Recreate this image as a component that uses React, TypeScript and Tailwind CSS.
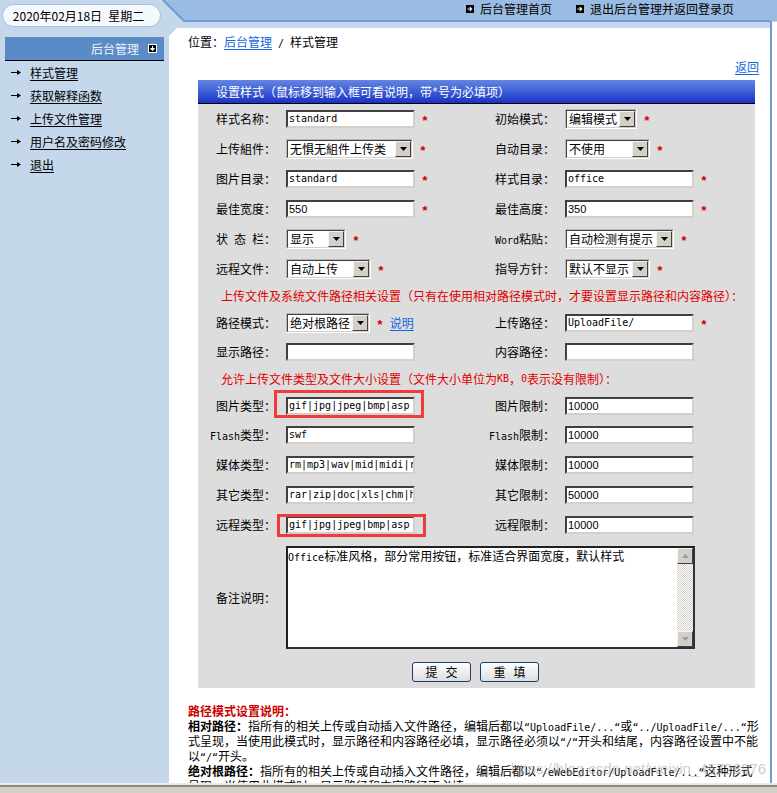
import type { ReactNode } from "react"

const MONO = "font-['DejaVu_Sans_Mono',monospace] text-[10px] leading-[10px]"

function A({ children }: { children: ReactNode }) {
  return <span className={MONO}>{children}</span>
}

function Star() {
  return (
    <span className="ml-[6px] translate-y-[3px] font-['Liberation_Mono',monospace] text-[13px] font-bold leading-[12px] text-[#d00000]">
      *
    </span>
  )
}

function TextBox({ children, numeric }: { children?: ReactNode; numeric?: boolean }) {
  return (
    <div
      className={`flex h-[18px] w-[129px] items-center overflow-hidden whitespace-nowrap border-2 border-t-[#404040] border-l-[#404040] border-r-[#d4d0c8] border-b-[#d4d0c8] bg-white pl-[1px] ${
        numeric ? "font-['Liberation_Sans',sans-serif] text-[11px]" : MONO
      }`}
    >
      {children}
    </div>
  )
}

function DropArrow() {
  return (
    <svg width="7" height="4" viewBox="0 0 7 4">
      <path d="M0 0h7L3.5 4z" fill="#000" />
    </svg>
  )
}

function Select({ value, className }: { value: string; className: string }) {
  return (
    <div className={`flex h-[20px] border border-t-[#b8b8b8] border-l-[#b8b8b8] border-r-white border-b-white ${className}`}>
      <div className="flex flex-1 items-center border border-t-[#404040] border-l-[#404040] border-r-[#d4d0c8] border-b-[#d4d0c8] bg-white">
        <span className="flex-1 overflow-hidden whitespace-nowrap pl-[2px]">{value}</span>
        <span className="flex h-[16px] w-[16px] shrink-0 items-center justify-center border border-t-[#f4f4f4] border-l-[#f4f4f4] border-r-[#404040] border-b-[#404040] bg-[#d4d0c8]">
          <DropArrow />
        </span>
      </div>
    </div>
  )
}

function Row({ className, children }: { className: string; children: ReactNode }) {
  return <div className={`grid grid-cols-[82px_200px_80px_195px] items-center ${className}`}>{children}</div>
}

function Label({ children, right }: { children: ReactNode; right?: boolean }) {
  return <div className={`whitespace-nowrap text-right ${right ? "pr-[5px]" : "pr-[4px]"}`}>{children}</div>
}

function Cell({ children, right }: { children?: ReactNode; right?: boolean }) {
  return <div className={`flex items-center ${right ? "pl-[5px]" : "pl-[6px]"}`}>{children}</div>
}

function LinkIcon() {
  return (
    <svg width="8" height="8" viewBox="0 0 8 8" className="mr-[6px]">
      <rect width="8" height="8" fill="#000" />
      <path d="M1.5 4h4M3.8 2.2 5.6 4 3.8 5.8" stroke="#fff" strokeWidth="1.2" fill="none" />
    </svg>
  )
}

function TopBar() {
  return (
    <div className="relative flex h-[28px] shrink-0">
      <svg className="absolute inset-0" width="777" height="28" viewBox="0 0 777 28" aria-hidden>
        <polygon points="163,0 777,0 777,21 184,21" fill="#9abce3" />
        <polyline points="163,0 184,21 770,21" fill="none" stroke="#6d9cd3" strokeWidth="2" />
        <rect x="770" y="21" width="2" height="7" fill="#6b9bd2" />
        <rect x="772" y="22" width="5" height="6" fill="#ffffff" />
      </svg>
      <div className="relative ml-[2px] mt-[4px] flex h-[23px] w-[159px] items-center justify-center rounded-full border border-[#a3bfdf] bg-[#f5f8fc] pr-[6px]">
        2020年02月18日<span className="ml-[6px]">星期二</span>
      </div>
      <nav className="relative ml-auto mr-[43px] flex h-[17px] items-center gap-[24px]">
        <a className="flex items-center">
          <LinkIcon />
          后台管理首页
        </a>
        <a className="flex items-center">
          <LinkIcon />
          退出后台管理并返回登录页
        </a>
      </nav>
    </div>
  )
}

function MenuArrow() {
  return (
    <svg width="12" height="7" viewBox="0 0 12 7">
      <path d="M1 3.5h8" stroke="#000" strokeWidth="1" />
      <path d="M7 1l4 2.5L7 6z" fill="#000" />
    </svg>
  )
}

function Sidebar() {
  const items = ["样式管理", "获取解释函数", "上传文件管理", "用户名及密码修改", "退出"]
  return (
    <aside className="w-[169px] shrink-0 pt-[9px]">
      <div className="mx-[5px] flex h-[24px] items-center justify-end border-b border-black bg-[#5b8bc7] pr-[7px] text-[#eef3fb]">
        <span>后台管理</span>
        <svg width="9" height="9" viewBox="0 0 9 9" className="ml-[9px]">
          <rect width="9" height="9" fill="#fff" />
          <rect x="1" y="1" width="7" height="7" fill="#000" />
          <path d="M4.5 2v2.5M2.5 4.5h4l-2 2.2z" stroke="#fff" strokeWidth="1" fill="#fff" />
        </svg>
      </div>
      <ul>
        {items.map((t) => (
          <li key={t} className="flex h-[23px] items-center pl-[10px]">
            <MenuArrow />
            <a className="ml-[8px] underline underline-offset-2">{t}</a>
          </li>
        ))}
      </ul>
    </aside>
  )
}

function RedBox({ children, className }: { children: ReactNode; className: string }) {
  return (
    <div className="relative">
      {children}
      <span className={`absolute border-[3px] border-[#ef3b3b] ${className}`} />
    </div>
  )
}

function ScrollBtn({ up }: { up?: boolean }) {
  return (
    <div className="flex h-[16px] w-[16px] items-center justify-center border border-t-[#f4f4f4] border-l-[#f4f4f4] border-r-[#404040] border-b-[#404040] bg-[#d4d0c8]">
      <svg width="7" height="4" viewBox="0 0 7 4">
        <path d={up ? "M0 4h7L3.5 0z" : "M0 0h7L3.5 4z"} fill="#9a9a9a" />
      </svg>
    </div>
  )
}

function StyleForm() {
  return (
    <section className="ml-[29px] mt-[6px] w-[557px]">
      <div className="flex h-[24px] items-center border-b border-black bg-linear-to-b from-[#6485e2] to-[#1e2ec4] pl-[18px] text-white">
        设置样式（鼠标移到输入框可看说明，带<A>*</A>号为必填项）
      </div>
      <div className="bg-[#dddddd]">
        <Row className="h-[30px]">
          <Label>样式名称：</Label>
          <Cell>
            <TextBox>standard</TextBox>
            <Star />
          </Cell>
          <Label right>初始模式：</Label>
          <Cell right>
            <Select value="编辑模式" className="w-[72px]" />
            <Star />
          </Cell>
        </Row>
        <Row className="h-[30px]">
          <Label>上传組件：</Label>
          <Cell>
            <Select value="无惧无組件上传类" className="w-[127px]" />
            <Star />
          </Cell>
          <Label right>自动目录：</Label>
          <Cell right>
            <Select value="不使用" className="w-[85px]" />
            <Star />
          </Cell>
        </Row>
        <Row className="h-[30px]">
          <Label>图片目录：</Label>
          <Cell>
            <TextBox>standard</TextBox>
            <Star />
          </Cell>
          <Label right>样式目录：</Label>
          <Cell right>
            <TextBox>office</TextBox>
            <Star />
          </Cell>
        </Row>
        <Row className="h-[30px]">
          <Label>最佳宽度：</Label>
          <Cell>
            <TextBox numeric>550</TextBox>
            <Star />
          </Cell>
          <Label right>最佳高度：</Label>
          <Cell right>
            <TextBox numeric>350</TextBox>
            <Star />
          </Cell>
        </Row>
        <Row className="h-[30px]">
          <Label>
            状<A> </A>态<A> </A>栏：
          </Label>
          <Cell>
            <Select value="显示" className="w-[60px]" />
            <Star />
          </Cell>
          <Label right>
            <A>Word</A>粘贴：
          </Label>
          <Cell right>
            <Select value="自动检测有提示" className="w-[109px]" />
            <Star />
          </Cell>
        </Row>
        <Row className="h-[30px]">
          <Label>远程文件：</Label>
          <Cell>
            <Select value="自动上传" className="w-[85px]" />
            <Star />
          </Cell>
          <Label right>指导方针：</Label>
          <Cell right>
            <Select value="默认不显示" className="w-[85px]" />
            <Star />
          </Cell>
        </Row>
        <div className="flex h-[24px] items-center whitespace-nowrap pl-[23px] text-[#e00000]">
          上传文件及系统文件路径相关设置（只有在使用相对路径模式时，才要设置显示路径和内容路径）：
        </div>
        <Row className="h-[30px]">
          <Label>路径模式：</Label>
          <Cell>
            <Select value="绝对根路径" className="w-[84px]" />
            <Star />
            <a className="ml-[6px] text-[#1166dd] underline underline-offset-2">说明</a>
          </Cell>
          <Label right>上传路径：</Label>
          <Cell right>
            <TextBox>UploadFile/</TextBox>
            <Star />
          </Cell>
        </Row>
        <Row className="h-[28px]">
          <Label>显示路径：</Label>
          <Cell>
            <TextBox />
          </Cell>
          <Label right>内容路径：</Label>
          <Cell right>
            <TextBox />
          </Cell>
        </Row>
        <div className="flex h-[26px] items-center whitespace-nowrap pl-[23px] text-[#e00000]">
          允许上传文件类型及文件大小设置（文件大小单位为<A>KB</A>，<A>0</A>表示没有限制）：
        </div>
        <Row className="h-[28px]">
          <Label>图片类型：</Label>
          <Cell>
            <RedBox className="-left-[12px] -right-[9px] -top-[7px] -bottom-[3px]">
              <TextBox>gif|jpg|jpeg|bmp|asp</TextBox>
            </RedBox>
          </Cell>
          <Label right>图片限制：</Label>
          <Cell right>
            <TextBox numeric>10000</TextBox>
          </Cell>
        </Row>
        <Row className="h-[30px]">
          <Label>
            <A>Flash</A>类型：
          </Label>
          <Cell>
            <TextBox>swf</TextBox>
          </Cell>
          <Label right>
            <A>Flash</A>限制：
          </Label>
          <Cell right>
            <TextBox numeric>10000</TextBox>
          </Cell>
        </Row>
        <Row className="h-[30px]">
          <Label>媒体类型：</Label>
          <Cell>
            <TextBox>rm|mp3|wav|mid|midi|ra|avi|mpg|mpeg|asf|asx|wma|mov</TextBox>
          </Cell>
          <Label right>媒体限制：</Label>
          <Cell right>
            <TextBox numeric>10000</TextBox>
          </Cell>
        </Row>
        <Row className="h-[30px]">
          <Label>其它类型：</Label>
          <Cell>
            <TextBox>rar|zip|doc|xls|chm|hlp|pdf|txt</TextBox>
          </Cell>
          <Label right>其它限制：</Label>
          <Cell right>
            <TextBox numeric>50000</TextBox>
          </Cell>
        </Row>
        <Row className="h-[30px]">
          <Label>远程类型：</Label>
          <Cell>
            <RedBox className="-left-[9px] -right-[11px] -top-[2px] -bottom-[3px]">
              <TextBox>gif|jpg|jpeg|bmp|asp</TextBox>
            </RedBox>
          </Cell>
          <Label right>远程限制：</Label>
          <Cell right>
            <TextBox numeric>10000</TextBox>
          </Cell>
        </Row>
        <Row className="h-[115px]">
          <Label>备注说明：</Label>
          <div className="col-span-3 pl-[6px]">
            <div className="flex h-[103px] w-[409px] border-2 border-t-[#202020] border-l-[#202020] border-r-[#303030] border-b-[#303030] bg-white">
              <div className="flex-1 pt-[1px]">
                <A>Office</A>标准风格，部分常用按钮，标准适合界面宽度，默认样式
              </div>
              <div className="flex w-[16px] flex-col">
                <ScrollBtn up />
                <div className="flex-1 bg-[repeating-conic-gradient(#d4d0c8_0_25%,#ffffff_0_50%)] bg-[length:2px_2px]" />
                <ScrollBtn />
              </div>
            </div>
          </div>
        </Row>
        <div className="flex h-[33px] items-center justify-center gap-[9px] pr-[2px]">
          <button className="flex h-[20px] w-[59px] items-center justify-center gap-[8px] rounded-[3px] border border-[#1b3d6e] bg-linear-to-b from-white to-[#dedede]">
            <span>提</span>
            <span>交</span>
          </button>
          <button className="flex h-[20px] w-[59px] items-center justify-center gap-[8px] rounded-[3px] border border-[#1b3d6e] bg-linear-to-b from-white to-[#dedede]">
            <span>重</span>
            <span>填</span>
          </button>
        </div>
      </div>
    </section>
  )
}

export default function App() {
  return (
    <div className="flex h-[793px] w-[777px] flex-col overflow-hidden bg-[#c5d7ea] font-['Noto_Sans_CJK_SC',sans-serif] text-[12px] leading-[14px] text-black">
      <TopBar />
      <div className="flex min-h-0 flex-1">
        <Sidebar />
        <main className="relative w-[603px] overflow-hidden border-r-2 border-[#6b9bd2] bg-white [clip-path:polygon(8px_0,100%_0,100%_100%,0_100%,0_8px)]">
          <div className="h-[21px] pl-[19px] pt-[7px]">
            位置：<a className="text-[#1166dd] underline underline-offset-2">后台管理</a>
            <A> / </A>样式管理
          </div>
          <div className="mt-[11px] h-[14px] pr-[11px] text-right">
            <a className="text-[#1166dd] underline underline-offset-2">返回</a>
          </div>
          <StyleForm />
          <div className="ml-[19px] mt-[15px] w-[572px] leading-[15px]">
            <div className="h-[15px] font-bold text-[#cc0000]">路径模式设置说明：</div>
            <div>
              <b>相对路径：</b>指所有的相关上传或自动插入文件路径，编辑后都以<A>“UploadFile/...“</A>或<A>“../UploadFile/...“</A>形式呈现，当使用此模式时，显示路径和内容路径必填，显示路径必须以<A>“/“</A>开头和结尾，内容路径设置中不能以<A>“/“</A>开头。
            </div>
            <div>
              <b>绝对根路径：</b>指所有的相关上传或自动插入文件路径，编辑后都以<A>“/eWebEditor/UploadFile/...“</A>这种形式呈现，当使用此模式时，显示路径和内容路径不必填。
            </div>
          </div>
          <div className="pointer-events-none absolute bottom-[6px] right-[4px] font-['Liberation_Sans',sans-serif] text-[15px] leading-[16px] text-[#9a9a9a]/50">
            https://blog.csdn.net/weixin_45728976
          </div>
        </main>
        <div className="flex-1 bg-white" />
      </div>
      <div className="h-[10px] shrink-0 border-t-2 border-[#ececec] bg-[#d4d0c8]">
        <div className="h-[2px] bg-[#8a8a8a]" />
      </div>
    </div>
  )
}
